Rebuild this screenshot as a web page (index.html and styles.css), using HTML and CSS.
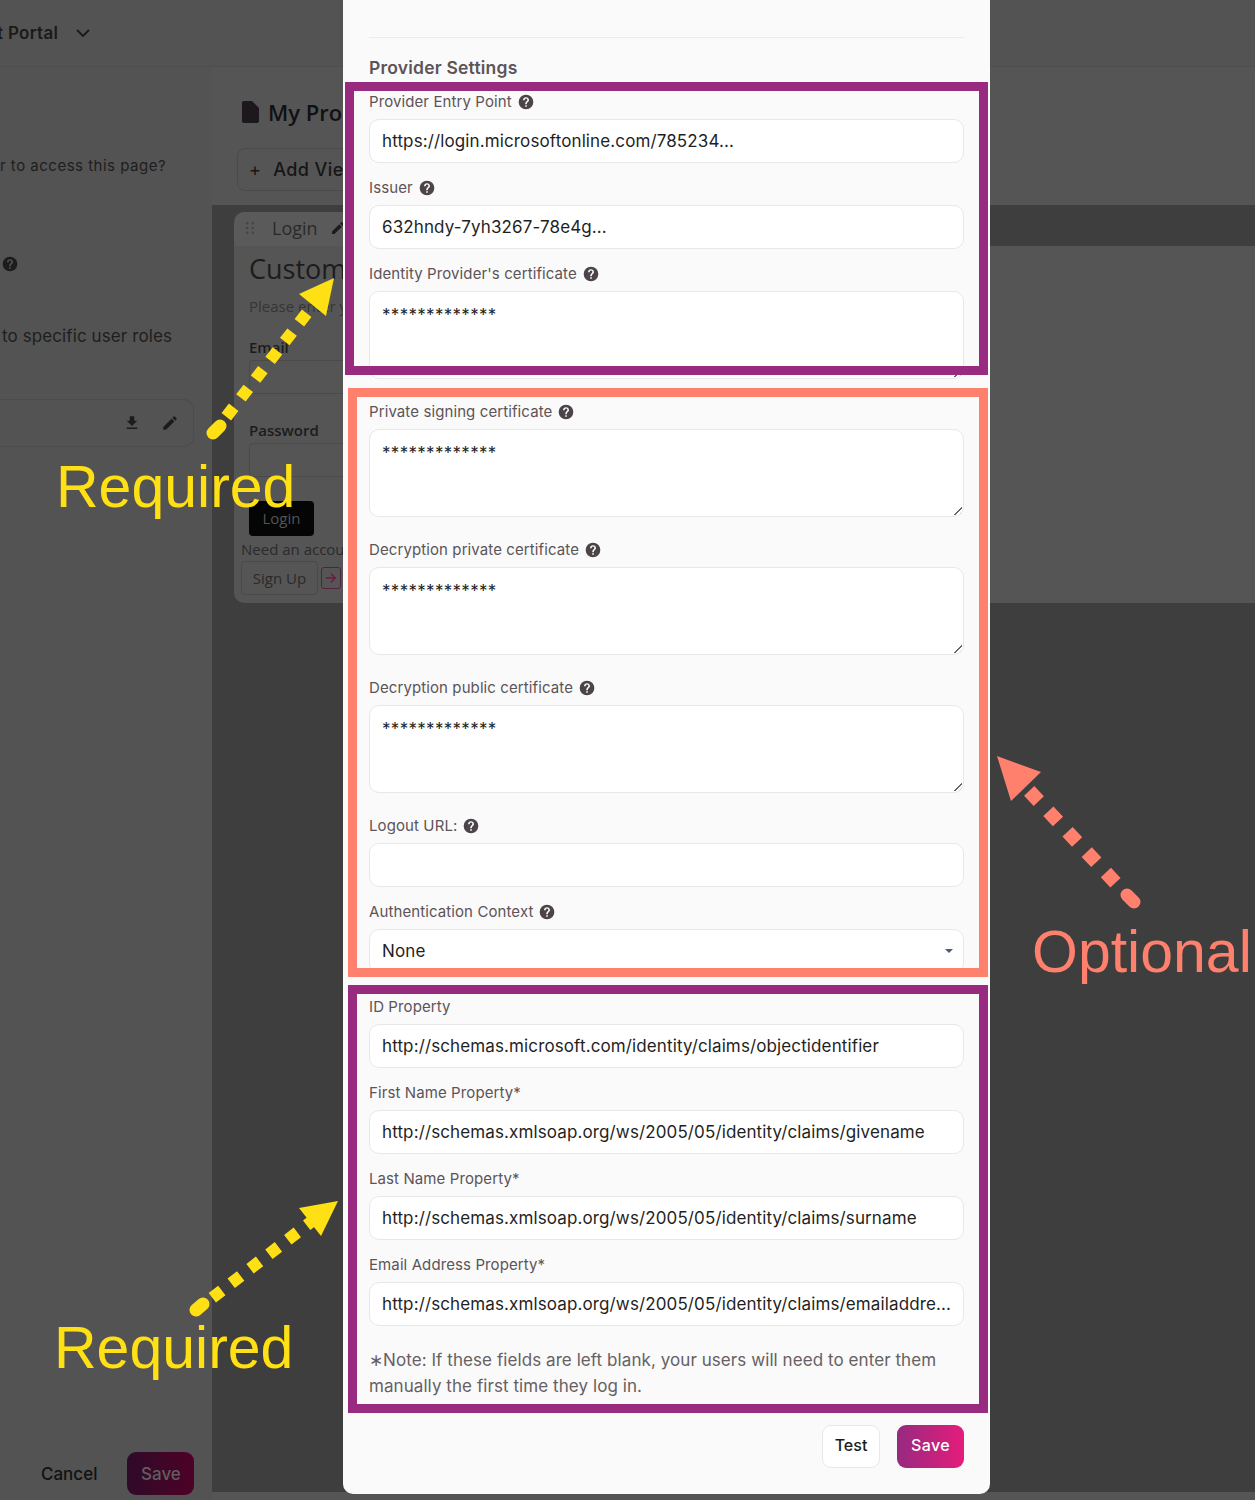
FILE: index.html
```html
<!DOCTYPE html>
<html lang="en">
<head>
    <meta charset="UTF-8">
    <meta name="viewport" content="width=device-width, initial-scale=1.0">
    <title>Provider Settings</title>
    <link rel="stylesheet" href="styles.css">
</head>
<body>
    <svg class="defs" width="0" height="0">
        <symbol id="help" viewBox="0 0 24 24"><path d="M12 1a11 11 0 1 0 0 22 11 11 0 0 0 0-22zm1.2 18.2h-2.4v-2.4h2.4v2.4zm2.3-7.8-1 1c-.9.9-1.3 1.6-1.3 3h-2.4v-.6c0-1.2.5-2.3 1.3-3.1l1.4-1.4c.4-.4.6-.9.6-1.5 0-1.2-1-2.1-2.1-2.1S9.9 8.1 9.900 9.300H7.500c0-2.500 2-4.500 4.500-4.500s4.500 2 4.500 4.500c0 .8-.4 1.600-1 2.100z"/></symbol>
        <symbol id="pencil" viewBox="0 0 24 24"><path d="M3 17.250V21h3.750L17.810 9.940l-3.750-3.750L3 17.250zM20.710 7.040a1 1 0 0 0 0-1.410l-2.340-2.340a1 1 0 0 0-1.410 0l-1.830 1.830 3.750 3.750 1.830-1.830z"/></symbol>
    </svg>

    <div class="page">
        <div class="topbar">
            <span class="portal">t Portal</span>
            <svg class="chevron" viewBox="0 0 16 10"><path d="M2 2l6 6 6-6" fill="none" stroke="currentColor" stroke-width="1.8"/></svg>
        </div>
        <div class="content">
            <div class="side">
                <p class="side-q">r to access this page?</p>
                <svg class="side-help"><use href="#help"/></svg>
                <p class="side-roles">to specific user roles</p>
                <div class="side-row">
                    <svg class="side-icon" viewBox="0 0 24 24"><path d="M19 9h-4V3H9v6H5l7 7 7-7zM5 18v2h14v-2H5z"/></svg>
                    <svg class="side-icon"><use href="#pencil"/></svg>
                </div>
                <div class="side-actions">
                    <span class="cancel">Cancel</span>
                    <span class="side-save">Save</span>
                </div>
            </div>
            <div class="main">
                <div class="main-head">
                    <div class="page-title">
                        <svg class="doc" viewBox="0 0 18 22"><path d="M3 0h8l7 7v13a2 2 0 0 1-2 2H3a2 2 0 0 1-2-2V2a2 2 0 0 1 2-2z"/></svg>
                        <span>My Pro</span>
                    </div>
                    <div class="add-view"><span class="plus">+</span> Add View</div>
                </div>
                <div class="canvas">
                    <div class="widget">
                        <div class="widget-head">
                            <svg class="grip" viewBox="0 0 8 12">
                                <circle cx="1.200" cy="1.200" r="1.200"/><circle cx="6.800" cy="1.200" r="1.200"/>
                                <circle cx="1.200" cy="6" r="1.200"/><circle cx="6.800" cy="6" r="1.200"/>
                                <circle cx="1.200" cy="10.800" r="1.200"/><circle cx="6.800" cy="10.800" r="1.200"/>
                            </svg>
                            <span class="widget-name">Login</span>
                            <svg class="widget-edit"><use href="#pencil"/></svg>
                        </div>
                        <div class="widget-body">
                            <h2>Custom</h2>
                            <p class="please">Please enter y</p>
                            <label class="login-label">Email</label>
                            <div class="login-input"></div>
                            <label class="login-label password">Password</label>
                            <div class="login-input"></div>
                            <span class="login-btn">Login</span>
                            <p class="need">Need an accou</p>
                            <div class="signup">
                                <span class="signup-btn">Sign Up</span>
                                <span class="signup-arrow">
                                    <svg viewBox="0 0 16 14"><path d="M2 7h11M8 2l5 5-5 5" fill="none" stroke="currentColor" stroke-width="1.500"/></svg>
                                </span>
                            </div>
                        </div>
                    </div>
                </div>
            </div>
        </div>
    </div>

    <div class="modal">
        <div class="modal-rule"></div>
        <h3>Provider Settings</h3>

        <div class="each first">
            <label>Provider Entry Point <svg class="help"><use href="#help"/></svg></label>
            <div class="field">https://login.microsoftonline.com/785234...</div>
        </div>
        <div class="each">
            <label>Issuer <svg class="help"><use href="#help"/></svg></label>
            <div class="field">632hndy-7yh3267-78e4g...</div>
        </div>
        <div class="each tall">
            <label>Identity Provider's certificate <svg class="help"><use href="#help"/></svg></label>
            <div class="field area">*************<span class="grab"></span></div>
        </div>
        <div class="each tall">
            <label>Private signing certificate <svg class="help"><use href="#help"/></svg></label>
            <div class="field area">*************<span class="grab"></span></div>
        </div>
        <div class="each tall">
            <label>Decryption private certificate <svg class="help"><use href="#help"/></svg></label>
            <div class="field area">*************<span class="grab"></span></div>
        </div>
        <div class="each tall">
            <label>Decryption public certificate <svg class="help"><use href="#help"/></svg></label>
            <div class="field area">*************<span class="grab"></span></div>
        </div>
        <div class="each">
            <label>Logout URL: <svg class="help"><use href="#help"/></svg></label>
            <div class="field"></div>
        </div>
        <div class="each last-optional">
            <label>Authentication Context <svg class="help"><use href="#help"/></svg></label>
            <div class="field select">None<span class="caret"></span></div>
        </div>
        <div class="each">
            <label>ID Property</label>
            <div class="field">http://schemas.microsoft.com/identity/claims/objectidentifier</div>
        </div>
        <div class="each">
            <label>First Name Property*</label>
            <div class="field">http://schemas.xmlsoap.org/ws/2005/05/identity/claims/givename</div>
        </div>
        <div class="each">
            <label>Last Name Property*</label>
            <div class="field">http://schemas.xmlsoap.org/ws/2005/05/identity/claims/surname</div>
        </div>
        <div class="each">
            <label>Email Address Property*</label>
            <div class="field">http://schemas.xmlsoap.org/ws/2005/05/identity/claims/emailaddre...</div>
        </div>
        <p class="note">∗Note: If these fields are left blank, your users will need to enter them manually the first time they log in.</p>
        <div class="buttons">
            <span class="btn-test">Test</span>
            <span class="btn-save">Save</span>
        </div>
    </div>

    <!-- annotations drawn on top of the screenshot -->
    <div class="box box-a"></div>
    <div class="box box-b"></div>
    <div class="box box-c"></div>

    <svg class="arrows" width="1255" height="1500" viewBox="0 0 1255 1500">
        <line class="tail yellow" x1="213" y1="433" x2="220" y2="426"/>
        <line class="dash yellow" x1="226.300" y1="416.700" x2="306.700" y2="313.300"/>
        <polygon class="yellow-fill" points="334,278 299,294 326,316"/>

        <line class="tail yellow" x1="196" y1="1310" x2="203" y2="1304"/>
        <line class="dash yellow" x1="212.300" y1="1297.700" x2="316" y2="1218"/>
        <polygon class="yellow-fill" points="338,1201 299,1208 321,1236"/>

        <line class="tail coral" x1="1127" y1="895" x2="1134" y2="902"/>
        <line class="dash coral wide" x1="1029.200" y1="790.900" x2="1115.800" y2="883.100"/>
        <polygon class="coral-fill" points="997,756 1041,772 1011,801"/>
    </svg>
    <div class="tag tag-req1">Required</div>
    <div class="tag tag-req2">Required</div>
    <div class="tag tag-opt">Optional</div>
</body>
</html>
```

FILE: styles.css
```css
body{
    margin: 0px;
    width: 1255px;
    height: 1500px;
    position: relative;
    overflow: hidden;
    background-color: #535353;
    font-family: Inter, "Liberation Sans", sans-serif;
}
.defs{
    position: absolute;
}

/* page behind the modal */
.page{
    height: 1500px;
    display: flex;
    flex-direction: column;
}
.topbar{
    height: 67px;
    box-sizing: border-box;
    border-bottom: 1px solid #4d4d4d;
    display: flex;
    align-items: center;
    color: #1a1a1a;
    font-size: 17px;
    font-weight: 600;
    letter-spacing: 0.3px;
    padding-bottom: 1px;
    overflow: hidden;
}
.portal{
    margin-left: -3px;
}
.chevron{
    width: 16px;
    height: 10px;
    margin-left: 17px;
}
.content{
    flex: 1;
    display: flex;
}
.side{
    width: 212px;
    flex-shrink: 0;
    color: #1e1e1e;
    overflow: hidden;
}
.side-q{
    margin: 89px 0px 0px 0px;
    font-size: 15px;
    line-height: 20px;
    letter-spacing: 0.5px;
    white-space: nowrap;
}
.side-help{
    display: block;
    width: 16px;
    height: 16px;
    margin: 80px 0px 0px 2px;
    fill: #1c1c1c;
}
.side-roles{
    margin: 52px 0px 0px 2px;
    font-size: 17px;
    line-height: 24px;
    letter-spacing: 0.1px;
    white-space: nowrap;
}
.side-row{
    width: 194px;
    height: 48px;
    margin-top: 51px;
    box-sizing: border-box;
    border: 1px solid #4c4c4c;
    border-left: 0px;
    border-radius: 0px 10px 10px 0px;
    display: flex;
    justify-content: flex-end;
    align-items: center;
    gap: 20px;
    padding-right: 14px;
}
.side-icon{
    width: 18px;
    height: 18px;
    fill: #1c1c1c;
}
.side-actions{
    margin-top: 1005px;
    display: flex;
    align-items: center;
    padding-left: 41px;
    gap: 30px;
}
.cancel{
    color: #111;
    font-size: 17px;
    font-weight: 500;
}
.side-save{
    width: 67px;
    height: 43px;
    border-radius: 9px;
    background: linear-gradient(90deg, #2f0a28, #4d0227);
    color: #5f5f5f;
    font-size: 17px;
    font-weight: 500;
    display: flex;
    align-items: center;
    justify-content: center;
}
.main{
    flex: 1;
    display: flex;
    flex-direction: column;
    background-color: #555;
}
.main-head{
    height: 138px;
    box-sizing: border-box;
    padding: 30px 0px 0px 25px;
}
.page-title{
    display: flex;
    align-items: center;
    gap: 9px;
    margin-left: 4px;
    font-size: 22px;
    font-weight: 600;
    color: #111;
    font-family: "Open Sans", sans-serif;
}
.doc{
    width: 18px;
    height: 22px;
    fill: #1c181b;
}
.add-view{
    width: 140px;
    height: 43px;
    margin-top: 21px;
    box-sizing: border-box;
    border: 1px solid #4a4a4a;
    border-radius: 8px;
    display: flex;
    align-items: center;
    padding-left: 11px;
    gap: 12px;
    font-size: 18px;
    font-weight: 500;
    letter-spacing: 0.4px;
    color: #161616;
    white-space: nowrap;
}
.plus{
    font-weight: 400;
}
.canvas{
    height: 1287px;
    box-sizing: border-box;
    background-color: #3e3e3e;
    padding: 7px 0px 0px 22px;
}
.widget{
    font-family: "Open Sans", sans-serif;
    color: #2a2a2a;
}
.widget-head{
    width: 150px;
    height: 34px;
    box-sizing: border-box;
    padding-bottom: 3px;
    background-color: #5a5a5a;
    border-radius: 10px 10px 0px 0px;
    display: flex;
    align-items: center;
    white-space: nowrap;
}
.grip{
    width: 8px;
    height: 12px;
    margin-left: 12px;
    fill: #444;
}
.widget-name{
    margin-left: 18px;
    font-size: 18px;
}
.widget-edit{
    width: 16px;
    height: 16px;
    margin-left: 12px;
    fill: #1c1c1c;
}
.widget-body{
    height: 357px;
    box-sizing: border-box;
    padding: 5px 0px 0px 15px;
    background-color: #555;
    border-radius: 0px 0px 0px 10px;
    white-space: nowrap;
}
.widget-body h2{
    margin: 0px;
    font-size: 27px;
    font-weight: 400;
    line-height: 36px;
    color: #1c1c1c;
}
.please{
    margin: 9px 0px 0px 0px;
    font-size: 15px;
    line-height: 20px;
    color: #353535;
}
.login-label{
    display: block;
    margin-top: 21px;
    font-size: 15px;
    line-height: 20px;
    font-weight: 600;
    color: #1c1c1c;
}
.login-label.password{
    margin-top: 26px;
}
.login-input{
    width: 300px;
    height: 34px;
    box-sizing: border-box;
    margin-top: 3px;
    border: 1px solid #4a4a4a;
    border-radius: 4px;
}
.login-btn{
    display: block;
    width: 65px;
    height: 35px;
    margin-top: 24px;
    line-height: 34px;
    text-align: center;
    background-color: #050505;
    border-radius: 4px;
    font-size: 15px;
    color: #545454;
}
.need{
    margin: 3px 0px 0px -8px;
    font-size: 15px;
    line-height: 20px;
    color: #2b2b2b;
}
.signup{
    margin: 2px 0px 0px -8px;
    display: flex;
    align-items: center;
    gap: 3px;
}
.signup-btn{
    width: 77px;
    height: 34px;
    box-sizing: border-box;
    border: 1px solid #4a4a4a;
    border-radius: 4px;
    line-height: 32px;
    text-align: center;
    font-size: 15px;
}
.signup-arrow{
    width: 20px;
    height: 22px;
    box-sizing: border-box;
    border: 1px solid #51213f;
    border-radius: 3px;
    color: #6d1a3e;
    display: flex;
    align-items: center;
    justify-content: center;
}
.signup-arrow svg{
    width: 14px;
    height: 12px;
}

/* modal */
.modal{
    position: absolute;
    left: 343px;
    top: -10px;
    width: 647px;
    height: 1504px;
    box-sizing: border-box;
    padding: 47px 26px 0px 26px;
    background-color: #fafafa;
    border-radius: 10px;
    color: #5c5458;
}
.modal-rule{
    border-top: 1px solid #ececec;
}
.modal h3{
    margin: 19px 0px 0px 0px;
    font-size: 17.5px;
    line-height: 22px;
    font-weight: 600;
    letter-spacing: 0.2px;
}
.each{
    margin-bottom: 15px;
}
.each.tall{
    margin-bottom: 23px;
}
.each.last-optional{
    margin-bottom: 24px;
}
.each.first{
    margin-top: 13px;
}
.each label{
    display: flex;
    align-items: center;
    gap: 6px;
    height: 20px;
    font-size: 15px;
    line-height: 20px;
    letter-spacing: 0.1px;
    white-space: nowrap;
}
.help{
    width: 16px;
    height: 16px;
    fill: #4c4449;
}
.field{
    position: relative;
    height: 44px;
    margin-top: 7px;
    box-sizing: border-box;
    padding: 0px 12px;
    background-color: #fff;
    border: 1px solid #e8e8e8;
    border-radius: 10px;
    color: #1f1f1f;
    font-size: 17px;
    letter-spacing: 0.12px;
    line-height: 42px;
    white-space: nowrap;
    overflow: hidden;
}
.field.area{
    height: 88px;
    line-height: 46px;
    letter-spacing: 0.3px;
}
.grab{
    position: absolute;
    right: 1px;
    bottom: 1px;
    width: 9px;
    height: 9px;
    background: linear-gradient(135deg, transparent 55%, #666 55%, #666 63%, transparent 63%, transparent 78%, #666 78%, #666 86%, transparent 86%);
}
.caret{
    position: absolute;
    right: 10px;
    top: 19px;
    border-left: 4px solid transparent;
    border-right: 4px solid transparent;
    border-top: 4px solid #4a5a75;
}
.note{
    margin: 21px 0px 0px 0px;
    font-size: 17px;
    line-height: 26px;
    letter-spacing: 0.07px;
    color: #666064;
}
.buttons{
    margin-top: 26px;
    display: flex;
    justify-content: flex-end;
    gap: 17px;
}
.btn-test,
.btn-save{
    height: 43px;
    box-sizing: border-box;
    padding-bottom: 3px;
    border-radius: 9px;
    font-size: 16px;
    font-weight: 500;
    display: flex;
    align-items: center;
    justify-content: center;
}
.btn-test{
    width: 58px;
    background-color: #fff;
    border: 1px solid #e8e8e8;
    color: #1c1c1c;
}
.btn-save{
    width: 67px;
    letter-spacing: 0.4px;
    background: linear-gradient(90deg, #962a80, #e51c7b);
    color: #fff;
}

/* annotations */
.box{
    position: absolute;
    box-sizing: border-box;
}
.box-a{
    left: 345px;
    top: 82px;
    width: 643px;
    height: 293px;
    border: 9px solid #982a80;
}
.box-b{
    left: 348px;
    top: 388px;
    width: 640px;
    height: 589px;
    border: 9px solid #ff806c;
}
.box-c{
    left: 348px;
    top: 985px;
    width: 640px;
    height: 428px;
    border: 9px solid #982a80;
}
.arrows{
    position: absolute;
    left: 0px;
    top: 0px;
}
.dash{
    stroke-width: 12px;
    stroke-dasharray: 12 11.800;
}
.dash.wide{
    stroke-width: 14px;
    stroke-dasharray: 14 14;
}
.tail{
    stroke-width: 13px;
    stroke-linecap: round;
}
.yellow{
    stroke: #ffe015;
}
.coral{
    stroke: #ff806c;
}
.yellow-fill{
    fill: #ffe015;
}
.coral-fill{
    fill: #ff806c;
}
.tag{
    position: absolute;
    font-family: "Liberation Sans", Arial, sans-serif;
    font-size: 59px;
    line-height: 70px;
    white-space: nowrap;
}
.tag-req1{
    left: 56px;
    top: 452px;
    color: #ffe015;
}
.tag-req2{
    left: 54px;
    top: 1313px;
    color: #ffe015;
}
.tag-opt{
    left: 1032px;
    top: 917px;
    color: #ff806c;
}
```
